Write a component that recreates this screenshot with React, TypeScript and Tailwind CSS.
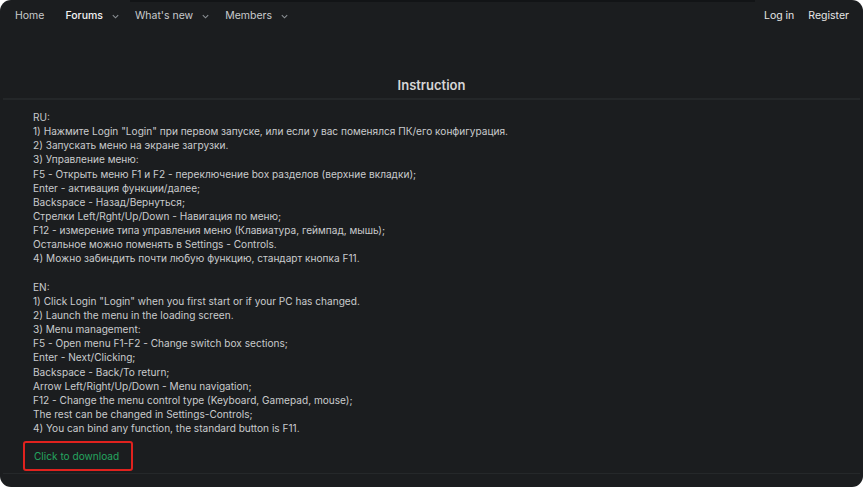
import * as React from 'react';

const NAV_LEFT = [
  { label: 'Home', active: false, menu: false },
  { label: 'Forums', active: true, menu: true },
  { label: "What's new", active: false, menu: true },
  { label: 'Members', active: false, menu: true },
];

const RU_LINES = [
  'RU:',
  '1) Нажмите Login "Login" при первом запуске, или если у вас поменялся ПК/его конфигурация.',
  '2) Запускать меню на экране загрузки.',
  '3) Управление меню:',
  'F5 - Открыть меню F1 и F2 - переключение box разделов (верхние вкладки);',
  'Enter - активация функции/далее;',
  'Backspace - Назад/Вернуться;',
  'Стрелки Left/Rght/Up/Down - Навигация по меню;',
  'F12 - измерение типа управления меню (Клавиатура, геймпад, мышь);',
  'Остальное можно поменять в Settings - Controls.',
  '4) Можно забиндить почти любую функцию, стандарт кнопка F11.',
];

const EN_LINES = [
  'EN:',
  '1) Click Login "Login" when you first start or if your PC has changed.',
  '2) Launch the menu in the loading screen.',
  '3) Menu management:',
  'F5 - Open menu F1-F2 - Change switch box sections;',
  'Enter - Next/Clicking;',
  'Backspace - Back/To return;',
  'Arrow Left/Right/Up/Down - Menu navigation;',
  'F12 - Change the menu control type (Keyboard, Gamepad, mouse);',
  'The rest can be changed in Settings-Controls;',
  '4) You can bind any function, the standard button is F11.',
];

function Chevron() {
  return (
    <svg width="9" height="9" viewBox="0 0 10 10" className="ml-[8px] mt-[1px]">
      <path d="M2 3.5 L5 6.5 L8 3.5" fill="none" stroke="#8a8f93" strokeWidth="1.2" />
    </svg>
  );
}

function TopNav() {
  return (
    <div className="flex items-center justify-between h-[28px] pl-[15px] pr-[14px] text-[10.5px]">
      <nav className="flex items-center">
        {NAV_LEFT.map((item, i) => (
          <span
            key={item.label}
            className={`flex items-center ${i === 0 ? '' : i === 1 ? 'ml-[21px]' : 'ml-[15px]'} ${
              item.active ? 'text-[#f2f2f2] font-medium' : 'text-[#c9cbcd]'
            }`}
          >
            {item.label}
            {item.menu && <Chevron />}
          </span>
        ))}
      </nav>
      <div className="flex items-center gap-[14px] text-[#e6e6e6]">
        <span>Log in</span>
        <span>Register</span>
      </div>
    </div>
  );
}

export default function App() {
  return (
    <div className="w-[863px] h-[487px] bg-white">
      <div
        className="w-full h-full bg-[#1b1d1f] rounded-[11px] overflow-hidden flex flex-col"
        style={{ fontFamily: 'Inter, "Noto Sans", sans-serif' }}
      >
        <div className="h-[2px] ml-[130px] mr-[108px] bg-[#121416]" />
        <TopNav />
        <h1 className="mt-[47px] text-center text-[13px] font-semibold text-[#d6d6d6] leading-[16px]">
          Instruction
        </h1>
        <div className="mx-[3px] mt-[5px] h-[2px] bg-[#242729]" />
        <div className="pl-[33px] pt-[10px] text-[10.1px] leading-[14.14px] text-[#c9cbcd]">
          {RU_LINES.map((line) => (
            <div key={line}>{line}</div>
          ))}
          <div className="h-[14.14px]" />
          {EN_LINES.map((line) => (
            <div key={line}>{line}</div>
          ))}
        </div>
        <div className="pl-[23px] mt-[6px]">
          <div className="flex items-center h-[30px] w-[110px] pl-[9px] border-2 border-[#e0221e] rounded-[3px]">
            <span className="whitespace-nowrap text-[10.1px] text-[#25a55f]">Click to download</span>
          </div>
        </div>
        <div className="mx-[3px] mt-[2px] h-[1px] bg-[#25282a]" />
      </div>
    </div>
  );
}
